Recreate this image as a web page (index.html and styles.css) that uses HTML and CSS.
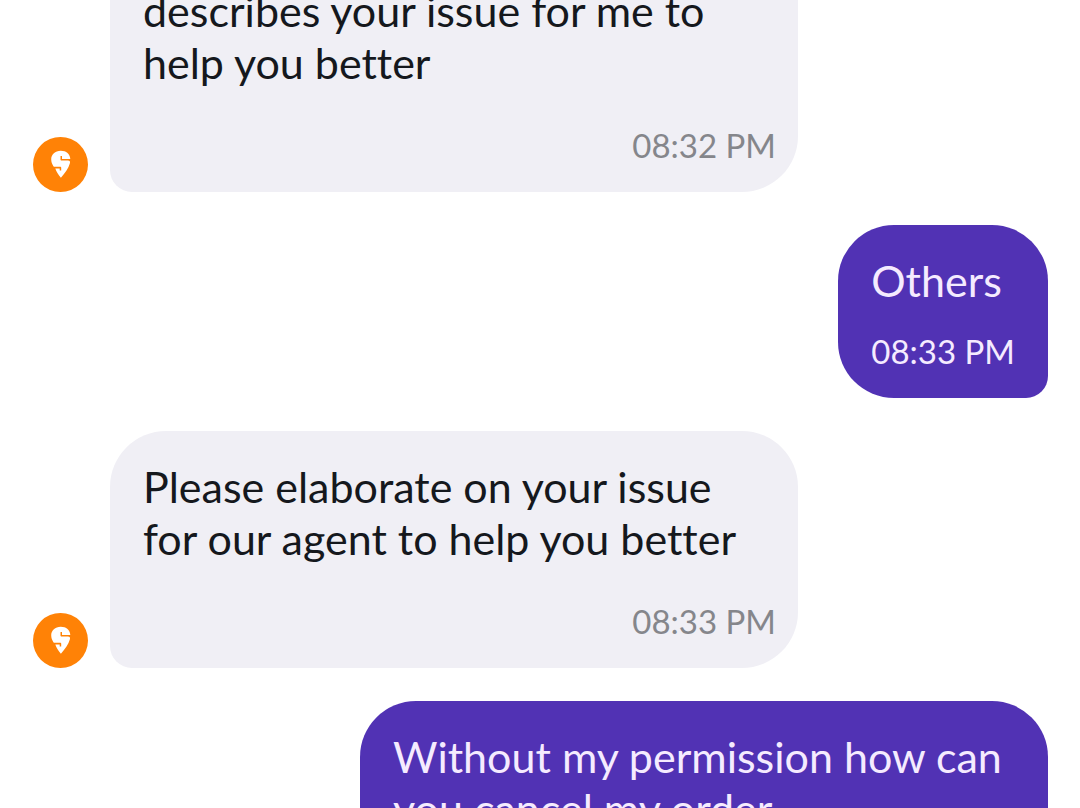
FILE: index.html
```
<!DOCTYPE html>
<html lang="en">
<head>
    <meta charset="UTF-8">
    <meta name="viewport" content="width=device-width, initial-scale=1.0">
    <title>Support Chat</title>
    <link rel="stylesheet" href="styles.css">
</head>
<body>
    <main class="chat">
        <div class="row agent">
            <svg class="avatar" viewBox="0 0 55 55" role="img" aria-label="Support agent">
                <circle cx="27.5" cy="27.5" r="27.5" fill="#ff8206"/>
                <path fill="#fff" d="M27.7 13.7c-5.5 0-9.5 3.8-9.5 8.6 0 2.6.9 4.9 2.2 6.9.3.4.8.6 1.4.6h5.4c.6 0 1 .4 1 1v2.6h-1.5v-1.9h-4.4c1.2 3.3 3 6 5.6 9.2 4.4-4.8 7.6-9.4 9-14.4.5-1.9-.1-2.8-2-2.8h-6.3c-.7 0-1.1-.4-1.1-1v-3.6H29v3h8.3c-.1-4.8-4-8.2-9.6-8.2z"/>
            </svg>
            <div class="bubble continued">
                <p class="text">describes your issue for me to help you better</p>
                <time class="time" datetime="20:32">08:32 PM</time>
            </div>
        </div>
        <div class="row user">
            <div class="bubble">
                <p class="text">Others</p>
                <time class="time" datetime="20:33">08:33 PM</time>
            </div>
        </div>
        <div class="row agent">
            <svg class="avatar" viewBox="0 0 55 55" role="img" aria-label="Support agent">
                <circle cx="27.5" cy="27.5" r="27.5" fill="#ff8206"/>
                <path fill="#fff" d="M27.7 13.7c-5.5 0-9.5 3.8-9.5 8.6 0 2.6.9 4.9 2.2 6.9.3.4.8.6 1.4.6h5.4c.6 0 1 .4 1 1v2.6h-1.5v-1.9h-4.4c1.2 3.3 3 6 5.6 9.2 4.4-4.8 7.6-9.4 9-14.4.5-1.9-.1-2.8-2-2.8h-6.3c-.7 0-1.1-.4-1.1-1v-3.6H29v3h8.3c-.1-4.8-4-8.2-9.6-8.2z"/>
            </svg>
            <div class="bubble">
                <p class="text">Please elaborate on your issue for our agent to help you better</p>
                <time class="time" datetime="20:33">08:33 PM</time>
            </div>
        </div>
        <div class="row user">
            <div class="bubble">
                <p class="text">Without my permission how can you cancel my order</p>
            </div>
        </div>
    </main>
</body>
</html>
```
FILE: styles.css
```
* {
    box-sizing: border-box;
}
body {
    margin: 0;
    background-color: #fff;
    font-family: Lato, "Liberation Sans", sans-serif;
    font-variant-ligatures: none;
}
.chat {
    height: 100vh;
    overflow: hidden;
    padding: 0 32px 0 33px;
}
.row {
    display: flex;
    align-items: flex-end;
    gap: 22px;
    margin-bottom: 33px;
}
.user {
    justify-content: flex-end;
}
.avatar {
    width: 55px;
    height: 55px;
    flex-shrink: 0;
}
.bubble {
    display: flex;
    flex-direction: column;
    max-width: 688px;
    padding: 30px 33px 27px;
    border-radius: 56px;
}
.agent .bubble {
    width: 688px;
    background-color: #f0eff5;
    color: #15181d;
    border-bottom-left-radius: 22px;
}
.user .bubble {
    background-color: #5132b4;
    color: #f5ebff;
    border-bottom-right-radius: 22px;
}
/* long message scrolled past the top edge */
.agent .continued {
    margin-top: -15px;
    padding-top: 0;
    border-top-left-radius: 0;
    border-top-right-radius: 0;
}
.text {
    margin: 0;
    font-size: 43px;
    line-height: 52px;
}
.time {
    margin-top: 24px;
    font-size: 33px;
    line-height: 40px;
}
.agent .time {
    align-self: flex-end;
    margin-top: 36px;
    margin-right: -11px;
    color: #85868b;
}
```
